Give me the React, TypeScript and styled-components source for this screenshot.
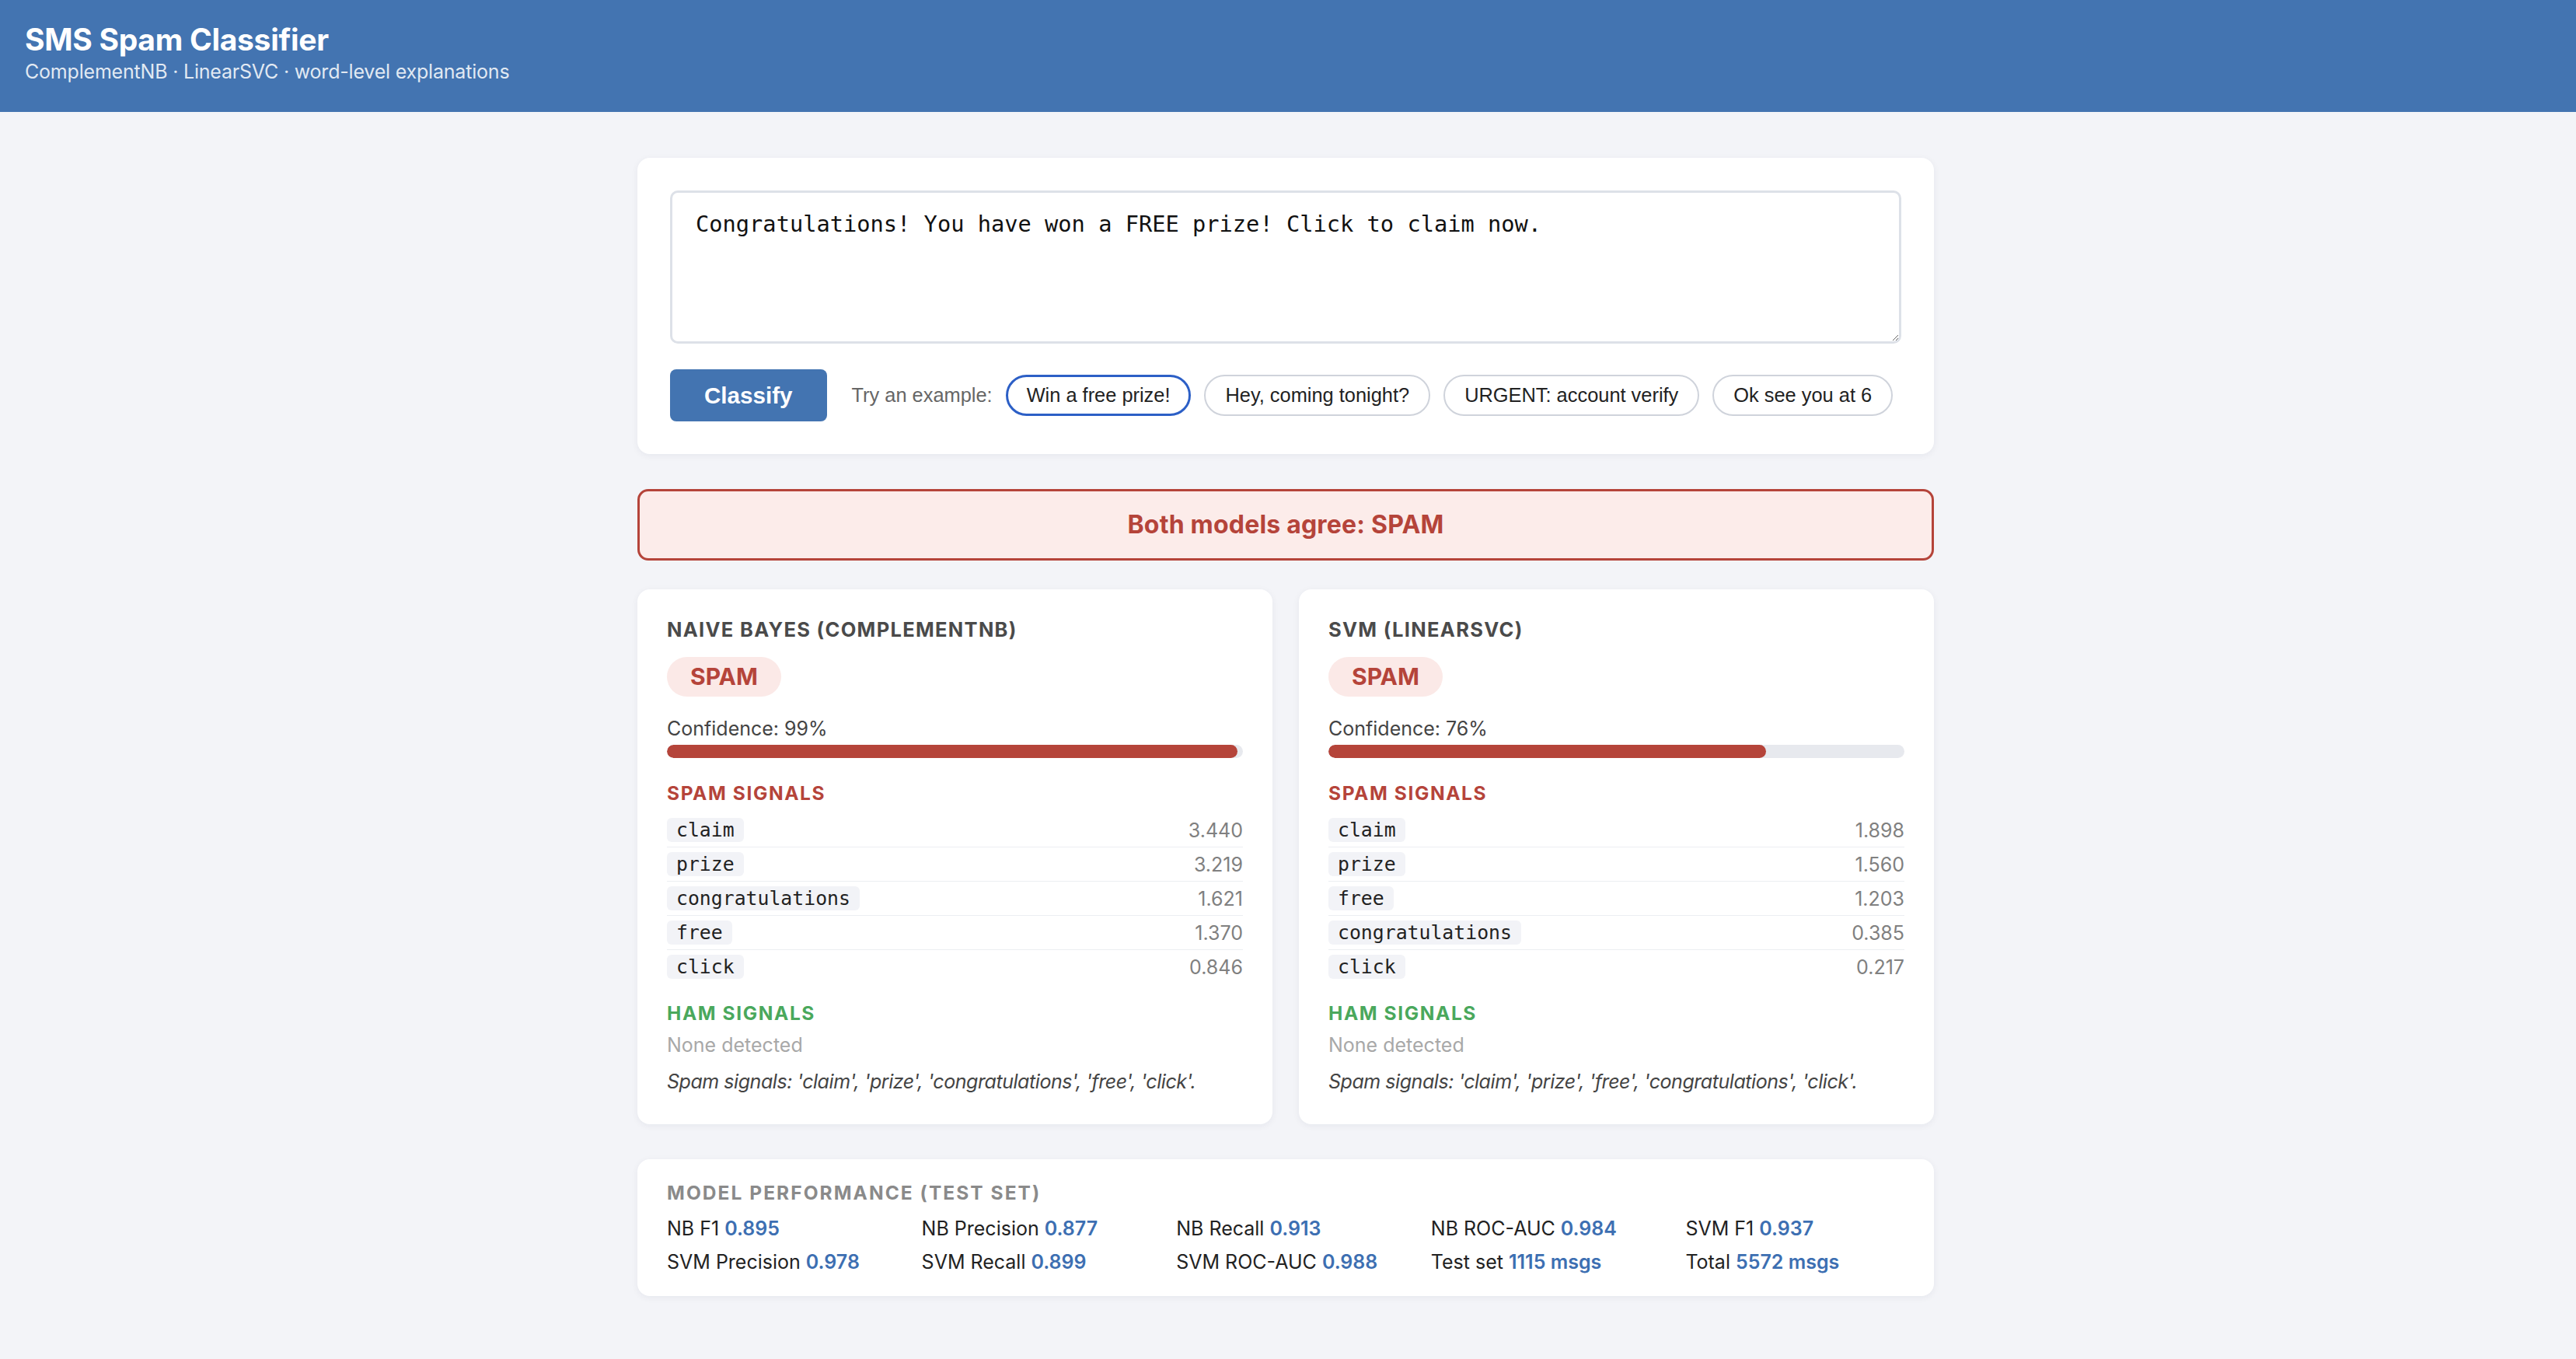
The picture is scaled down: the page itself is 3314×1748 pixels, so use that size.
import React from "react";
import styled, { createGlobalStyle } from "styled-components";

const GlobalStyle = createGlobalStyle`
  html, body {
    margin: 0;
    padding: 0;
    background: #f3f4f8;
    font-family: "Inter", "Noto Sans", sans-serif;
    color: #222;
  }
  * { box-sizing: border-box; }
`;

type Signal = { word: string; score: string };
type Model = {
  name: string;
  label: string;
  confidence: number;
  spam: Signal[];
  summary: string;
};

const examples = [
  "Win a free prize!",
  "Hey, coming tonight?",
  "URGENT: account verify",
  "Ok see you at 6",
];

const models: Model[] = [
  {
    name: "Naive Bayes (ComplementNB)",
    label: "SPAM",
    confidence: 99,
    spam: [
      { word: "claim", score: "3.440" },
      { word: "prize", score: "3.219" },
      { word: "congratulations", score: "1.621" },
      { word: "free", score: "1.370" },
      { word: "click", score: "0.846" },
    ],
    summary: "Spam signals: 'claim', 'prize', 'congratulations', 'free', 'click'.",
  },
  {
    name: "SVM (LinearSVC)",
    label: "SPAM",
    confidence: 76,
    spam: [
      { word: "claim", score: "1.898" },
      { word: "prize", score: "1.560" },
      { word: "free", score: "1.203" },
      { word: "congratulations", score: "0.385" },
      { word: "click", score: "0.217" },
    ],
    summary: "Spam signals: 'claim', 'prize', 'free', 'congratulations', 'click'.",
  },
];

const metrics = [
  ["NB F1", "0.895"],
  ["NB Precision", "0.877"],
  ["NB Recall", "0.913"],
  ["NB ROC-AUC", "0.984"],
  ["SVM F1", "0.937"],
  ["SVM Precision", "0.978"],
  ["SVM Recall", "0.899"],
  ["SVM ROC-AUC", "0.988"],
  ["Test set", "1115 msgs"],
  ["Total", "5572 msgs"],
];

const App: React.FC = () => {
  return (
    <>
      <GlobalStyle />
      <Header>
        <Title>SMS Spam Classifier</Title>
        <Subtitle>ComplementNB · LinearSVC · word-level explanations</Subtitle>
      </Header>
      <Main>
        <InputCard>
          <MessageInput
            defaultValue="Congratulations! You have won a FREE prize! Click to claim now."
          />
          <ControlRow>
            <ClassifyButton>Classify</ClassifyButton>
            <TryLabel>Try an example:</TryLabel>
            {examples.map((ex, i) => (
              <ExampleChip key={ex} $active={i === 0}>
                {ex}
              </ExampleChip>
            ))}
          </ControlRow>
        </InputCard>

        <Verdict>Both models agree: SPAM</Verdict>

        <ModelGrid>
          {models.map((m) => (
            <ModelCard key={m.name}>
              <ModelName>{m.name}</ModelName>
              <LabelPill>{m.label}</LabelPill>
              <Confidence>Confidence: {m.confidence}%</Confidence>
              <Track>
                <Fill style={{ width: `${m.confidence}%` }} />
              </Track>
              <SectionHead $tone="spam">Spam signals</SectionHead>
              <SignalList>
                {m.spam.map((s) => (
                  <SignalRow key={s.word}>
                    <Word>{s.word}</Word>
                    <Score>{s.score}</Score>
                  </SignalRow>
                ))}
              </SignalList>
              <SectionHead $tone="ham" $gap={23}>
                Ham signals
              </SectionHead>
              <Empty>None detected</Empty>
              <Summary>{m.summary}</Summary>
            </ModelCard>
          ))}
        </ModelGrid>

        <PerfCard>
          <PerfTitle>Model performance (test set)</PerfTitle>
          <MetricGrid>
            {metrics.map(([k, v]) => (
              <Metric key={k}>
                {k} <MetricValue>{v}</MetricValue>
              </Metric>
            ))}
          </MetricGrid>
        </PerfCard>
      </Main>
    </>
  );
};

export default App;

const Header = styled.header`
  background: #4374b1;
  color: #fff;
  padding: 27px 32px 37px;
`;

const Title = styled.h1`
  margin: 0;
  font-size: 39px;
  line-height: 48px;
  font-weight: 700;
  letter-spacing: -0.3px;
`;

const Subtitle = styled.div`
  margin-top: 2px;
  font-size: 25px;
  line-height: 30px;
  letter-spacing: -0.2px;
  color: rgba(255, 255, 255, 0.86);
`;

const Main = styled.main`
  width: 1668px;
  margin: 59px calc(50% - 831px) 80px calc(50% - 837px);
`;

const Card = styled.section`
  background: #fff;
  border-radius: 16px;
  box-shadow: 0 2px 10px rgba(20, 30, 60, 0.06);
`;

const InputCard = styled(Card)`
  padding: 42px 42px 42px;
`;

const MessageInput = styled.textarea`
  display: block;
  width: 100%;
  height: 197px;
  padding: 22px 30px;
  border: 3px solid #dde1e8;
  border-radius: 10px;
  font-family: "DejaVu Sans Mono", "Liberation Mono", monospace;
  font-size: 28.7px;
  line-height: 36px;
  color: #111;
  background: #fff;
  outline: none;
`;

const ControlRow = styled.div`
  display: flex;
  align-items: center;
  gap: 17px;
  margin-top: 33px;
  font-family: "Liberation Sans", Arial, sans-serif;
`;

const ClassifyButton = styled.button`
  height: 67px;
  padding: 0 44px;
  border: none;
  border-radius: 8px;
  background: #4374b1;
  color: #fff;
  font-family: "Liberation Sans", Arial, sans-serif;
  font-size: 29.6px;
  font-weight: 700;
  margin-right: 15px;
`;

const TryLabel = styled.span`
  font-size: 25.4px;
  color: #666;
`;

const ExampleChip = styled.button<{ $active?: boolean }>`
  height: 53px;
  padding: 0 ${(p) => (p.$active ? 24 : 25)}px;
  border: ${(p) => (p.$active ? "3px solid #2c5fc6" : "2px solid #cfd3db")};
  border-radius: 999px;
  background: #fff;
  color: #222;
  font-family: "Liberation Sans", Arial, sans-serif;
  font-size: 25.4px;
`;

const Verdict = styled.div`
  margin-top: 45px;
  padding: 24px;
  border: 3px solid #b5443a;
  border-radius: 14px;
  background: #fcecea;
  color: #b5443a;
  text-align: center;
  font-size: 32px;
  line-height: 38px;
  font-weight: 700;
  letter-spacing: 0.2px;
`;

const ModelGrid = styled.div`
  display: grid;
  grid-template-columns: 1fr 1fr;
  gap: 34px;
  margin-top: 37px;
`;

const ModelCard = styled(Card)`
  padding: 36px 38px 40px;
`;

const ModelName = styled.h2`
  margin: 0;
  font-size: 25.5px;
  line-height: 32px;
  font-weight: 700;
  text-transform: uppercase;
  letter-spacing: 1.3px;
  color: #4a4a4a;
`;

const LabelPill = styled.div`
  display: inline-block;
  margin-top: 19px;
  padding: 0 30px;
  height: 51px;
  line-height: 51px;
  border-radius: 999px;
  background: #fbe9e7;
  color: #b5443a;
  font-size: 30px;
  font-weight: 700;
`;

const Confidence = styled.div`
  margin-top: 26px;
  font-size: 25px;
  line-height: 30px;
  color: #444;
`;

const Track = styled.div`
  margin-top: 6px;
  height: 17px;
  border-radius: 999px;
  background: #e7e9ee;
  overflow: hidden;
`;

const Fill = styled.div`
  height: 100%;
  border-radius: 999px;
  background: #b5443a;
`;

const SectionHead = styled.h3<{ $tone: "spam" | "ham"; $gap?: number }>`
  margin: ${(p) => p.$gap ?? 30}px 0 0;
  font-size: 24.5px;
  line-height: 30px;
  font-weight: 700;
  text-transform: uppercase;
  letter-spacing: 1.6px;
  color: ${(p) => (p.$tone === "spam" ? "#b5443a" : "#4aa85c")};
`;

const SignalList = styled.div`
  margin-top: 11px;
`;

const SignalRow = styled.div`
  display: flex;
  align-items: center;
  justify-content: space-between;
  padding: 6px 0;
  border-bottom: 1px solid #eceef2;
  &:last-child {
    border-bottom: none;
  }
`;

const Word = styled.code`
  display: inline-block;
  height: 31px;
  line-height: 31px;
  padding: 0 12px;
  border-radius: 6px;
  background: #f2f3f7;
  color: #222;
  font-family: "DejaVu Sans Mono", "Liberation Mono", monospace;
  font-size: 24.8px;
`;

const Score = styled.span`
  font-size: 25px;
  color: #808080;
`;

const Empty = styled.div`
  margin-top: 11px;
  font-size: 25px;
  line-height: 30px;
  color: #a8a8a8;
`;

const Summary = styled.p`
  margin: 17px 0 0;
  font-size: 25px;
  line-height: 30px;
  font-style: italic;
  letter-spacing: -0.45px;
  color: #444;
`;

const PerfCard = styled(Card)`
  margin-top: 45px;
  padding: 28px 38px 29px;
`;

const PerfTitle = styled.h3`
  margin: 0;
  font-size: 24.5px;
  line-height: 30px;
  font-weight: 700;
  text-transform: uppercase;
  letter-spacing: 2.05px;
  color: #8a8a8a;
`;

const MetricGrid = styled.div`
  display: grid;
  grid-template-columns: repeat(5, 1fr);
  column-gap: 46px;
  row-gap: 13px;
  margin-top: 16px;
`;

const Metric = styled.div`
  font-size: 25px;
  line-height: 30px;
  color: #222;
`;

const MetricValue = styled.span`
  color: #3d6fb2;
  font-weight: 600;
`;
